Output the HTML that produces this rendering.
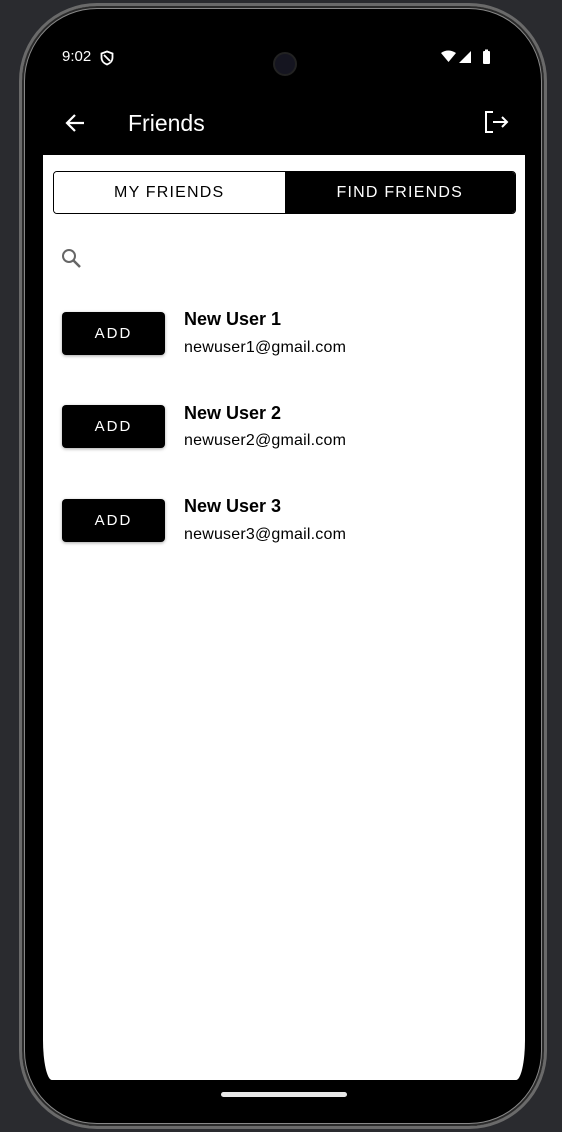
<!DOCTYPE html>
<html><head><style>
*{margin:0;padding:0;box-sizing:border-box}
body{width:562px;height:1132px;background:#2a2b2f;position:relative;overflow:hidden;font-family:"Liberation Sans",sans-serif}
.frame{position:absolute;left:19px;top:3px;width:528px;height:1126px;border-radius:78px;background:#000;border:3px solid #6a6a6a;box-shadow:inset 0 0 0 2px #2a2a2a, inset 0 0 0 3px #888}
.screen{position:absolute;left:43px;top:155px;width:482px;height:925px;background:#fff;border-radius:0 0 9px 9px / 0 0 40px 40px}
.t{position:absolute;color:#fff}
.tabs{position:absolute;left:53px;top:171px;width:463px;height:43px;border:1.5px solid #000;border-radius:4px;overflow:hidden;display:flex}
.tabs div{flex:1;display:flex;align-items:center;justify-content:center;font-size:16px;letter-spacing:1.2px;font-weight:500}
.btn{position:absolute;left:62px;width:103px;height:43px;background:#000;color:#fff;border-radius:4px;font-size:15px;letter-spacing:2px;display:flex;align-items:center;justify-content:center;box-shadow:0 1px 3px rgba(0,0,0,.35)}
.name{position:absolute;left:184px;font-size:18px;font-weight:bold}
.mail{position:absolute;left:184px;font-size:16px;letter-spacing:0.2px}
</style></head><body>
<div class="frame"></div>
<div style="position:absolute;left:273px;top:52px;width:24px;height:24px;border-radius:50%;background:#151520;border:2px solid #222"></div>
<div class="t" style="left:62px;top:48px;font-size:15px">9:02</div>
<svg style="position:absolute;left:99px;top:50px" width="16" height="16" viewBox="0 0 16 16"><path d="M8 1.5L2.5 3.5v4c0 3.5 2.5 6 5.5 7 3-1 5.5-3.5 5.5-7v-4z M5 5l6 6" fill="none" stroke="#fff" stroke-width="1.8"/></svg>
<svg style="position:absolute;left:440px;top:49px" width="54" height="16" viewBox="0 0 54 16"><path d="M1 4Q8-1 16 4L8.5 13z" fill="#fff"/><path d="M31 2V14H19z" fill="#fff"/><rect x="43" y="2" width="7" height="13" rx="1" fill="#fff"/><rect x="45" y="0.5" width="3" height="2" fill="#fff"/></svg>
<svg style="position:absolute;left:64px;top:112px" width="22" height="22" viewBox="0 0 22 22"><path d="M20 11H3M11 3L3 11l8 8" fill="none" stroke="#fff" stroke-width="2.2"/></svg>
<div class="t" style="left:128px;top:110px;font-size:23px;font-weight:500">Friends</div>
<svg style="position:absolute;left:484px;top:110px" width="26" height="24" viewBox="0 0 26 24"><path d="M9 2H2v20h7M9 12h14M18 7l5 5-5 5" fill="none" stroke="#fff" stroke-width="2"/></svg>
<div class="screen"></div>
<div class="tabs"><div style="background:#fff;color:#000">MY FRIENDS</div><div style="background:#000;color:#fff">FIND FRIENDS</div></div>
<svg style="position:absolute;left:60px;top:247px" width="24" height="24" viewBox="0 0 24 24"><circle cx="9" cy="9" r="6" fill="none" stroke="#666" stroke-width="2"/><path d="M13.5 13.5L20 20" stroke="#666" stroke-width="2.5"/></svg>
<div class="btn" style="top:312px">ADD</div><div class="name" style="top:309px">New User 1</div><div class="mail" style="top:339px">newuser1@gmail.com</div>
<div class="btn" style="top:405px">ADD</div><div class="name" style="top:403px">New User 2</div><div class="mail" style="top:432px">newuser2@gmail.com</div>
<div class="btn" style="top:499px">ADD</div><div class="name" style="top:496px">New User 3</div><div class="mail" style="top:526px">newuser3@gmail.com</div>
<div style="position:absolute;left:221px;top:1092px;width:126px;height:5px;border-radius:3px;background:#e8e8e8"></div>
</body></html>
